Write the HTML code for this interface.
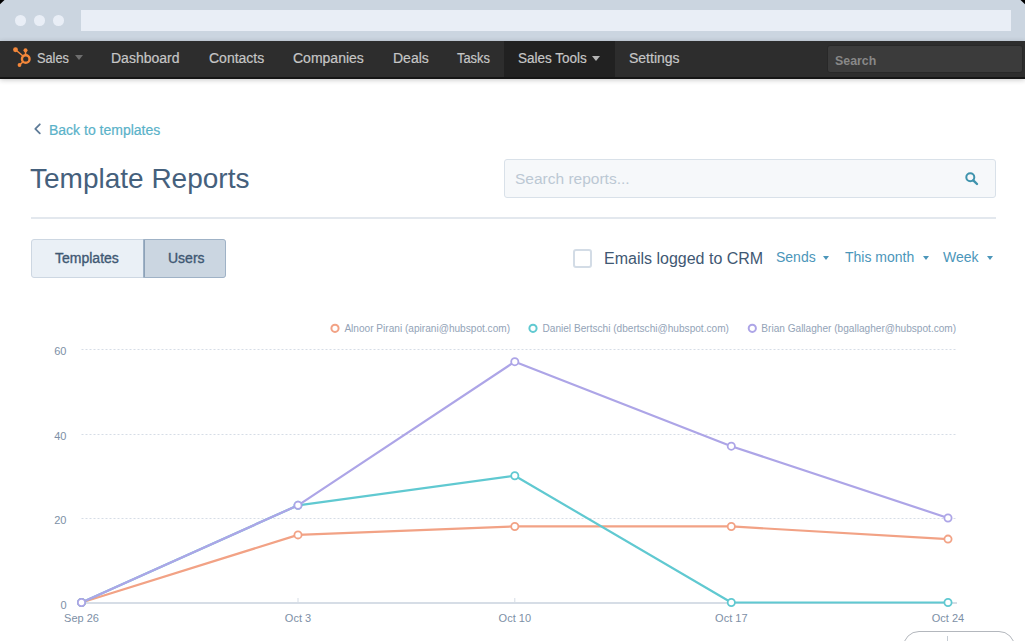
<!DOCTYPE html>
<html><head><meta charset="utf-8">
<style>
*{box-sizing:border-box;margin:0;padding:0}
html,body{width:1025px;height:641px;overflow:hidden;background:#fff;font-family:"Liberation Sans",sans-serif;position:relative}
.abs{position:absolute}
#chrome{left:0;top:0;width:1025px;height:41px;background:#cbd5e0}
.dot{width:10.6px;height:10.6px;border-radius:50%;background:#e9eef6;top:15.3px}
#addr{left:81px;top:10px;width:930px;height:21px;background:#e9eef6}
#corner{left:0;top:0}
#nav{left:0;top:41px;width:1025px;height:38px;background:#2d2d2d;border-bottom:2px solid #151515;box-shadow:0 1px 5px rgba(0,0,0,.22)}
.ni{top:0;height:37px;line-height:35px;font-size:14px;color:#c6c6c6;white-space:nowrap;transform-origin:0 50%;-webkit-text-stroke:0.2px #c6c6c6}
.caret{width:0;height:0;border-left:4.5px solid transparent;border-right:4.5px solid transparent;border-top:5px solid #8a8a8a}
#salestools{left:504px;top:0;width:111px;height:36px;background:#212121}
#nsearch{left:827px;top:4px;width:196px;height:27.5px;background:#3b3b3b;border:1px solid #282828;border-radius:3px}
#nsearch span{position:absolute;left:7px;top:6.5px;font-size:13.6px;line-height:16px;font-weight:bold;color:#888;transform:scaleX(0.91);transform-origin:0 50%}
.txt{white-space:nowrap}
</style></head>
<body>
<div id="chrome" class="abs"></div>
<svg id="corner" class="abs" width="1025" height="8" style="left:0;top:0">
<polygon points="0,0 4.5,0 0,4.3" fill="#000"/>
<polygon points="1025,0 1020.5,0 1025,4.3" fill="#000"/>
</svg>
<div class="dot abs" style="left:15px"></div>
<div class="dot abs" style="left:34px"></div>
<div class="dot abs" style="left:53px"></div>
<div id="addr" class="abs"></div>

<div id="nav" class="abs">
  <div id="salestools" class="abs"></div>
  <svg class="abs" style="left:8px;top:3px" width="32" height="32" viewBox="0 0 32 32">
    <g fill="none" stroke="#f4873a" stroke-linecap="round">
      <circle cx="17.75" cy="15" r="3.8" stroke-width="2.4"/>
      <line x1="7.5" y1="5.75" x2="15" y2="12" stroke-width="1.6"/>
      <line x1="17.5" y1="6.5" x2="17.6" y2="11" stroke-width="1.6"/>
      <line x1="11.5" y1="21" x2="15.2" y2="17.6" stroke-width="1.6"/>
    </g>
    <g fill="#f4873a">
      <circle cx="7.5" cy="5.75" r="2.4"/>
      <circle cx="17.5" cy="6.3" r="2.0"/>
      <circle cx="11.5" cy="21" r="1.9"/>
    </g>
  </svg>
  <div class="ni abs" style="left:37px;transform:scaleX(0.91)">Sales</div>
  <div class="caret abs" style="left:74.5px;top:14px;border-left-width:4.7px;border-right-width:4.7px;border-top:5.3px solid #6e6e6e"></div>
  <div class="ni abs" style="left:111px">Dashboard</div>
  <div class="ni abs" style="left:209px">Contacts</div>
  <div class="ni abs" style="left:293px">Companies</div>
  <div class="ni abs" style="left:393px">Deals</div>
  <div class="ni abs" style="left:457px;transform:scaleX(0.92)">Tasks</div>
  <div class="ni abs" style="left:518px;transform:scaleX(0.965)">Sales Tools</div>
  <div class="caret abs" style="left:592px;top:14.5px;border-left-width:4.7px;border-right-width:4.7px;border-top:5.3px solid #b5b5b5"></div>
  <div class="ni abs" style="left:629px">Settings</div>
  <div id="nsearch" class="abs"><span>Search</span></div>
</div>

<svg class="abs" style="left:33px;top:122px" width="10" height="14" viewBox="0 0 10 14">
  <polyline points="6.8,2.3 2.3,6.8 6.8,11.3" fill="none" stroke="#5e7b98" stroke-width="1.8" stroke-linecap="round" stroke-linejoin="round"/>
</svg>
<div class="abs txt" style="left:49px;top:122px;font-size:14px;line-height:16px;color:#5ab2c9;-webkit-text-stroke:0.2px #5ab2c9">Back to templates</div>
<div class="abs txt" style="left:30px;top:163px;font-size:28px;line-height:32px;color:#45607c">Template Reports</div>

<div class="abs" style="left:504px;top:159px;width:492px;height:39px;background:#f6f8fa;border:1px solid #d9e1e9;border-radius:3px"></div>
<div class="abs txt" style="left:515px;top:170px;font-size:15.5px;line-height:18px;color:#bcc8d4">Search reports...</div>
<svg class="abs" style="left:963px;top:170px" width="17" height="17" viewBox="0 0 17 17">
  <circle cx="7.3" cy="7.3" r="4" fill="none" stroke="#3f93ad" stroke-width="2"/>
  <line x1="10.3" y1="10.3" x2="14" y2="14" stroke="#3f93ad" stroke-width="2.4" stroke-linecap="round"/>
</svg>
<div class="abs" style="left:31px;top:217px;width:965px;height:2px;background:#e3e8ee"></div>

<div class="abs" style="left:31px;top:239px;width:195px;height:39px;border:1px solid #cdd7e2;border-radius:3px;background:#eaf0f6;overflow:hidden">
  <div class="abs" style="left:112px;top:0;width:83px;height:39px;background:#cbd6e1;border-left:1px solid #8da2b8"></div>
</div>
<div class="abs" style="left:143px;top:239px;width:83px;height:39px;border:1px solid #9fb2c6;border-radius:0 3px 3px 0"></div>
<div class="abs txt" style="left:55px;top:250px;font-size:14px;line-height:16px;color:#3f5873;-webkit-text-stroke:0.35px #3f5873">Templates</div>
<div class="abs txt" style="left:168px;top:250px;font-size:14px;line-height:16px;color:#3f5873;-webkit-text-stroke:0.35px #3f5873">Users</div>

<div class="abs" style="left:573px;top:249px;width:19px;height:19px;border:2px solid #d3dce6;border-radius:3px;background:#fff"></div>
<div class="abs txt" style="left:604px;top:250px;font-size:16px;line-height:18px;color:#3f5873">Emails logged to CRM</div>
<div class="abs txt" style="left:776px;top:249px;font-size:14px;line-height:16px;color:#4b96ba">Sends</div>
<div class="caret abs" style="left:823px;top:256px;border-left-width:3.5px;border-right-width:3.5px;border-top:4px solid #4b96ba"></div>
<div class="abs txt" style="left:845px;top:249px;font-size:14px;line-height:16px;color:#4b96ba">This month</div>
<div class="caret abs" style="left:923px;top:256px;border-left-width:3.5px;border-right-width:3.5px;border-top:4px solid #4b96ba"></div>
<div class="abs txt" style="left:943px;top:249px;font-size:14px;line-height:16px;color:#4b96ba">Week</div>
<div class="caret abs" style="left:987px;top:256px;border-left-width:3.5px;border-right-width:3.5px;border-top:4px solid #4b96ba"></div>

<!--CHART-->
<svg class="abs" style="left:0;top:0" width="1025" height="641" viewBox="0 0 1025 641">
<line x1="81.5" y1="518.5" x2="957" y2="518.5" stroke="#d6dde6" stroke-width="1" stroke-dasharray="2 2"/>
<line x1="81.5" y1="434.5" x2="957" y2="434.5" stroke="#d6dde6" stroke-width="1" stroke-dasharray="2 2"/>
<line x1="81.5" y1="349.5" x2="957" y2="349.5" stroke="#d6dde6" stroke-width="1" stroke-dasharray="2 2"/>
<line x1="81.5" y1="603" x2="957" y2="603" stroke="#d6dde6" stroke-width="2"/>
<line x1="298" y1="598" x2="298" y2="603" stroke="#d6dde6" stroke-width="1"/>
<line x1="514.8" y1="598" x2="514.8" y2="603" stroke="#d6dde6" stroke-width="1"/>
<line x1="731.3" y1="598" x2="731.3" y2="603" stroke="#d6dde6" stroke-width="1"/>
<line x1="948" y1="598" x2="948" y2="603" stroke="#d6dde6" stroke-width="1"/>
<text x="66.5" y="608.8" text-anchor="end" font-size="11" fill="#7d8fa6">0</text>
<text x="66.5" y="524.3" text-anchor="end" font-size="11" fill="#7d8fa6">20</text>
<text x="66.5" y="439.8" text-anchor="end" font-size="11" fill="#7d8fa6">40</text>
<text x="66.5" y="355.3" text-anchor="end" font-size="11" fill="#7d8fa6">60</text>
<text x="81.5" y="622.2" text-anchor="middle" font-size="11" fill="#7d8fa6">Sep 26</text>
<text x="298" y="622.2" text-anchor="middle" font-size="11" fill="#7d8fa6">Oct 3</text>
<text x="514.8" y="622.2" text-anchor="middle" font-size="11" fill="#7d8fa6">Oct 10</text>
<text x="731.3" y="622.2" text-anchor="middle" font-size="11" fill="#7d8fa6">Oct 17</text>
<text x="948" y="622.2" text-anchor="middle" font-size="11" fill="#7d8fa6">Oct 24</text>
<polyline points="81.5,602.5 298,534.9 514.8,526.45 731.3,526.45 948,539.12" fill="none" stroke="#f2a285" stroke-width="2.2" stroke-linejoin="round"/>
<polyline points="81.5,602.5 298,505.32 514.8,475.75 731.3,602.5 948,602.5" fill="none" stroke="#60c9d1" stroke-width="2.2" stroke-linejoin="round"/>
<polyline points="81.5,602.5 298,505.32 514.8,361.68 731.3,446.18 948,518.0" fill="none" stroke="#ada5e7" stroke-width="2.2" stroke-linejoin="round"/>
<circle cx="81.5" cy="602.5" r="3.6" fill="#fff" stroke="#f2a285" stroke-width="1.8"/>
<circle cx="298" cy="534.9" r="3.6" fill="#fff" stroke="#f2a285" stroke-width="1.8"/>
<circle cx="514.8" cy="526.45" r="3.6" fill="#fff" stroke="#f2a285" stroke-width="1.8"/>
<circle cx="731.3" cy="526.45" r="3.6" fill="#fff" stroke="#f2a285" stroke-width="1.8"/>
<circle cx="948" cy="539.12" r="3.6" fill="#fff" stroke="#f2a285" stroke-width="1.8"/>
<circle cx="81.5" cy="602.5" r="3.6" fill="#fff" stroke="#60c9d1" stroke-width="1.8"/>
<circle cx="298" cy="505.32" r="3.6" fill="#fff" stroke="#60c9d1" stroke-width="1.8"/>
<circle cx="514.8" cy="475.75" r="3.6" fill="#fff" stroke="#60c9d1" stroke-width="1.8"/>
<circle cx="731.3" cy="602.5" r="3.6" fill="#fff" stroke="#60c9d1" stroke-width="1.8"/>
<circle cx="948" cy="602.5" r="3.6" fill="#fff" stroke="#60c9d1" stroke-width="1.8"/>
<circle cx="81.5" cy="602.5" r="3.6" fill="#fff" stroke="#ada5e7" stroke-width="1.8"/>
<circle cx="298" cy="505.32" r="3.6" fill="#fff" stroke="#ada5e7" stroke-width="1.8"/>
<circle cx="514.8" cy="361.68" r="3.6" fill="#fff" stroke="#ada5e7" stroke-width="1.8"/>
<circle cx="731.3" cy="446.18" r="3.6" fill="#fff" stroke="#ada5e7" stroke-width="1.8"/>
<circle cx="948" cy="518.0" r="3.6" fill="#fff" stroke="#ada5e7" stroke-width="1.8"/>
<circle cx="335" cy="328.3" r="3.6" fill="#fff" stroke="#f2a285" stroke-width="2"/>
<text x="344.4" y="331.6" font-size="10.1" fill="#93a3b7">Alnoor Pirani (apirani@hubspot.com)</text>
<circle cx="533" cy="328.3" r="3.6" fill="#fff" stroke="#60c9d1" stroke-width="2"/>
<text x="542.5" y="331.6" font-size="10.1" fill="#93a3b7">Daniel Bertschi (dbertschi@hubspot.com)</text>
<circle cx="752.3" cy="328.3" r="3.6" fill="#fff" stroke="#ada5e7" stroke-width="2"/>
<text x="761.3" y="331.6" font-size="10.1" fill="#93a3b7">Brian Gallagher (bgallagher@hubspot.com)</text>
</svg>
<!--/CHART-->
<div class="abs" style="left:903px;top:631px;width:112px;height:40px;border:1.5px solid #b3b7bd;border-radius:16px"></div>
<div class="abs" style="left:946.5px;top:636px;width:1px;height:10px;background:#c5ccd4"></div>
</body></html>
